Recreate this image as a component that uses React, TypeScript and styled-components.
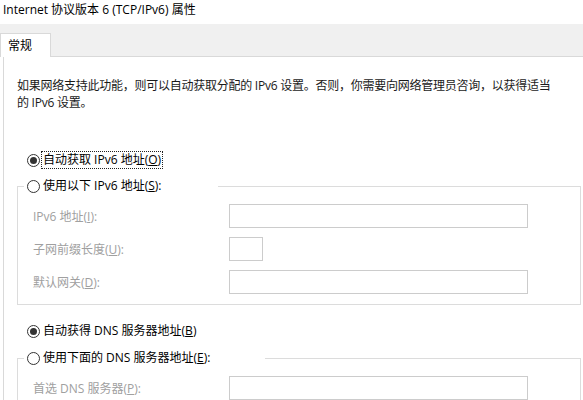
import React from "react";
import styled, { createGlobalStyle } from "styled-components";

const GlobalStyle = createGlobalStyle`
  html, body { margin: 0; padding: 0; background: #ffffff; overflow: hidden; }
  body {
    font-family: "Open Sans", "Noto Sans CJK SC", sans-serif;
    font-size: 12px;
    color: #1a1a1a;
  }
`;

const Window = styled.div`
  width: 583px;
  height: 400px;
  overflow: hidden;
  background: #ffffff;
  display: flex;
  flex-direction: column;
`;

const TitleBar = styled.div`
  flex: none;
  height: 24px;
  padding-left: 3px;
  line-height: 20px;
  color: #000000;
  white-space: nowrap;
`;

const TabStrip = styled.div`
  flex: none;
  height: 32px;
  background: #f0f0f0;
  border-bottom: 1px solid #d9d9d9;
  display: flex;
  align-items: flex-end;
`;

const Tab = styled.div`
  width: 51px;
  height: 24px;
  margin-bottom: -1px;
  background: #ffffff;
  border: 1px solid #d9d9d9;
  border-bottom: none;
  padding: 1px 0 0 7px;
  box-sizing: border-box;
  line-height: 22px;
  color: #000000;
`;

const Panel = styled.div`
  flex: none;
  margin-left: 3px;
  width: 600px;
  height: 400px;
  border-left: 1px solid #d9d9d9;
  padding: 20px 0 0 13px;
  display: flex;
  flex-direction: column;
`;

const Description = styled.p`
  margin: 0;
  line-height: 17px;
  letter-spacing: -0.25px;
  color: #1a1a1a;
  white-space: nowrap;
`;

const RadioRow = styled.div<{ $top: number }>`
  display: flex;
  align-items: center;
  height: 20px;
  margin-top: ${(p) => p.$top}px;
  margin-left: 10px;
`;

const Circle = styled.span<{ $checked?: boolean }>`
  width: 13px;
  height: 13px;
  box-sizing: border-box;
  border: 1px solid #333333;
  border-radius: 50%;
  display: flex;
  align-items: center;
  justify-content: center;
  flex: none;
  margin-right: 2px;
  &::after {
    content: "";
    width: 7px;
    height: 7px;
    border-radius: 50%;
    background: #333333;
    display: ${(p) => (p.$checked ? "block" : "none")};
  }
`;

const RadioText = styled.span<{ $focused?: boolean }>`
  line-height: 16px;
  padding: 0 1px;
  color: #000000;
  white-space: nowrap;
  outline: ${(p) => (p.$focused ? "1px dotted #222" : "none")};
`;

const Group = styled.fieldset<{ $top: number }>`
  margin: ${(p) => p.$top}px 0 0 0;
  width: 564px;
  box-sizing: border-box;
  border: 1px solid #dcdcdc;
  padding: 0;
`;

const Legend = styled.legend<{ $w: number }>`
  margin-left: 6px;
  padding: 0 0 0 3px;
  width: ${(p) => p.$w}px;
  box-sizing: border-box;
  height: 20px;
  display: flex;
  align-items: center;
`;

const FieldGrid = styled.div`
  padding: 8px 0 10px 15px;
  display: grid;
  grid-template-columns: 196px auto;
  grid-auto-rows: 24px;
  row-gap: 9px;
  align-items: center;
  justify-items: start;
`;

const FieldLabel = styled.span`
  color: #a0a0a0;
  white-space: nowrap;
`;

const Input = styled.div<{ $w: number }>`
  width: ${(p) => p.$w}px;
  height: 24px;
  box-sizing: border-box;
  border: 1px solid #cccccc;
  background: #ffffff;
`;

type RadioProps = { checked?: boolean; focused?: boolean; children: React.ReactNode };

function Radio({ checked, focused, children }: RadioProps) {
  return (
    <>
      <Circle $checked={checked} />
      <RadioText $focused={focused}>{children}</RadioText>
    </>
  );
}

export default function App() {
  return (
    <>
      <GlobalStyle />
      <Window>
        <TitleBar>Internet 协议版本 6 (TCP/IPv6) 属性</TitleBar>
        <TabStrip>
          <Tab>常规</Tab>
        </TabStrip>
        <Panel>
          <Description>
            如果网络支持此功能，则可以自动获取分配的 IPv6 设置。否则，你需要向网络管理员咨询，以获得适当
            <br />
            的 IPv6 设置。
          </Description>

          <RadioRow $top={39}>
            <Radio checked focused>
              自动获取 IPv6 地址(<u>O</u>)
            </Radio>
          </RadioRow>

          <Group $top={6}>
            <Legend $w={194}>
              <Radio>
                使用以下 IPv6 地址(<u>S</u>):
              </Radio>
            </Legend>
            <FieldGrid>
              <FieldLabel>
                IPv6 地址(<u>I</u>):
              </FieldLabel>
              <Input $w={299} />
              <FieldLabel>
                子网前缀长度(<u>U</u>):
              </FieldLabel>
              <Input $w={34} />
              <FieldLabel>
                默认网关(<u>D</u>):
              </FieldLabel>
              <Input $w={299} />
            </FieldGrid>
          </Group>

          <RadioRow $top={16}>
            <Radio checked>
              自动获得 DNS 服务器地址(<u>B</u>)
            </Radio>
          </RadioRow>

          <Group $top={7}>
            <Legend $w={241}>
              <Radio>
                使用下面的 DNS 服务器地址(<u>E</u>):
              </Radio>
            </Legend>
            <FieldGrid>
              <FieldLabel>
                首选 DNS 服务器(<u>P</u>):
              </FieldLabel>
              <Input $w={299} />
            </FieldGrid>
          </Group>
        </Panel>
      </Window>
    </>
  );
}
